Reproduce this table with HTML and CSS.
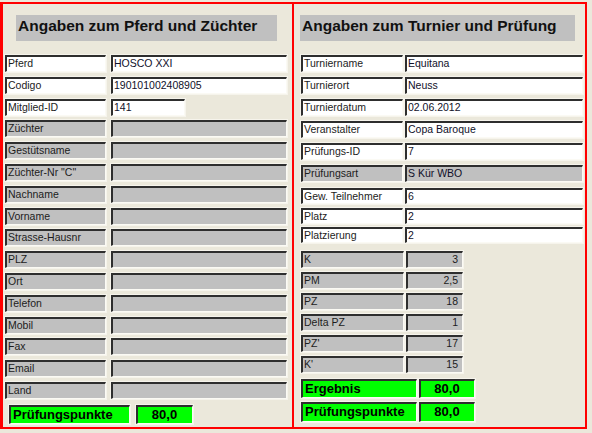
FILE: index.html
```html
<!DOCTYPE html>
<html lang="de">
<head>
<meta charset="utf-8">
<title>Angaben</title>
<link rel="stylesheet" href="styles.css">
</head>
<body>
<div class="sheet">
  <section class="panel panel-left">
    <h2 class="title">Angaben zum Pferd und Züchter</h2>
    <div class="rows rows-left">
      <div class="row"><span class="fld lbl white">Pferd</span><span class="fld val white">HOSCO XXI</span></div>
      <div class="row"><span class="fld lbl white">Codigo</span><span class="fld val white">190101002408905</span></div>
      <div class="row"><span class="fld lbl white">Mitglied-ID</span><span class="fld val val-short white">141</span></div>
      <div class="row"><span class="fld lbl grey">Züchter</span><span class="fld val grey"></span></div>
      <div class="row"><span class="fld lbl grey">Gestütsname</span><span class="fld val grey"></span></div>
      <div class="row"><span class="fld lbl grey">Züchter-Nr "C"</span><span class="fld val grey"></span></div>
      <div class="row"><span class="fld lbl grey">Nachname</span><span class="fld val grey"></span></div>
      <div class="row"><span class="fld lbl grey">Vorname</span><span class="fld val grey"></span></div>
      <div class="row"><span class="fld lbl grey">Strasse-Hausnr</span><span class="fld val grey"></span></div>
      <div class="row"><span class="fld lbl grey">PLZ</span><span class="fld val grey"></span></div>
      <div class="row"><span class="fld lbl grey">Ort</span><span class="fld val grey"></span></div>
      <div class="row"><span class="fld lbl grey">Telefon</span><span class="fld val grey"></span></div>
      <div class="row"><span class="fld lbl grey">Mobil</span><span class="fld val grey"></span></div>
      <div class="row"><span class="fld lbl grey">Fax</span><span class="fld val grey"></span></div>
      <div class="row"><span class="fld lbl grey">Email</span><span class="fld val grey"></span></div>
      <div class="row"><span class="fld lbl grey">Land</span><span class="fld val grey"></span></div>
    </div>
    <div class="score-left">
      <span class="fld green glbl">Prüfungspunkte</span><span class="fld green gval">80,0</span>
    </div>
  </section>

  <section class="panel panel-right">
    <h2 class="title">Angaben zum Turnier und Prüfung</h2>
    <div class="rows group-a">
      <div class="row"><span class="fld rlbl white">Turniername</span><span class="fld rval white">Equitana</span></div>
      <div class="row"><span class="fld rlbl white">Turnierort</span><span class="fld rval white">Neuss</span></div>
      <div class="row"><span class="fld rlbl white">Turnierdatum</span><span class="fld rval white">02.06.2012</span></div>
      <div class="row"><span class="fld rlbl white">Veranstalter</span><span class="fld rval white">Copa Baroque</span></div>
      <div class="row"><span class="fld rlbl white">Prüfungs-ID</span><span class="fld rval white">7</span></div>
      <div class="row"><span class="fld rlbl grey">Prüfungsart</span><span class="fld rval grey">S Kür WBO</span></div>
    </div>
    <div class="rows group-b">
      <div class="row"><span class="fld rlbl white">Gew. Teilnehmer</span><span class="fld rval white">6</span></div>
      <div class="row"><span class="fld rlbl white">Platz</span><span class="fld rval white">2</span></div>
      <div class="row"><span class="fld rlbl white">Platzierung</span><span class="fld rval white">2</span></div>
    </div>
    <div class="rows group-c">
      <div class="row"><span class="fld klbl grey">K</span><span class="fld kval grey">3</span></div>
      <div class="row"><span class="fld klbl grey">PM</span><span class="fld kval grey">2,5</span></div>
      <div class="row"><span class="fld klbl grey">PZ</span><span class="fld kval grey">18</span></div>
      <div class="row"><span class="fld klbl grey">Delta PZ</span><span class="fld kval grey">1</span></div>
      <div class="row"><span class="fld klbl grey">PZ'</span><span class="fld kval grey">17</span></div>
      <div class="row"><span class="fld klbl grey">K'</span><span class="fld kval grey">15</span></div>
    </div>
    <div class="rows group-d">
      <div class="row row-erg"><span class="fld green elbl">Ergebnis</span><span class="fld green eval">80,0</span></div>
      <div class="row row-pp"><span class="fld green elbl">Prüfungspunkte</span><span class="fld green eval">80,0</span></div>
    </div>
  </section>
</div>
</body>
</html>
```

FILE: styles.css
```css
html, body {
  margin: 0;
  padding: 0;
}

body {
  background: #ebe8db;
  font-family: "Liberation Sans", Arial, Helvetica, sans-serif;
  width: 592px;
  height: 433px;
  overflow: hidden;
}

.sheet {
  display: flex;
  margin-top: 2px;
}

.panel {
  box-sizing: border-box;
  height: 427px;
  border: 2px solid #ff0000;
  display: flex;
  flex-direction: column;
  align-items: flex-start;
}

.panel-left {
  width: 294px;
  border-left-width: 3px;
}

.panel-right {
  width: 293px;
  border-left: none;
}

.title {
  box-sizing: border-box;
  margin: 11px 0 0 13px;
  width: 261px;
  height: 26px;
  padding: 2px 0 0 2px;
  background: #c0c0c0;
  font-size: 15.5px;
  line-height: 18px;
  font-weight: bold;
  color: #111;
  white-space: nowrap;
}

.panel-right .title {
  margin-left: 6px;
  width: 275px;
}

.rows {
  display: flex;
  flex-direction: column;
}

.row {
  display: flex;
  height: 17px;
}

.fld {
  box-sizing: border-box;
  display: block;
  height: 100%;
  border-style: solid;
  border-width: 2px 1px 1px 2px;
  border-color: #2e2e2e #fbfaf4 #fbfaf4 #2e2e2e;
  box-shadow: 0 0 0 1px #f6f4ec;
  padding: 0 2px 0 1px;
  font-size: 10.5px;
  line-height: 13px;
  color: #1c1c1c;
  white-space: nowrap;
  overflow: hidden;
}

.white { background: #ffffff; }
.grey { background: #c0c0c0; }
.green {
  background: #00ff00;
  font-weight: bold;
  font-size: 13px;
  line-height: 16px;
  color: #000;
}

.val, .rval { color: #10102a; }

/* left panel */
.rows-left {
  margin-top: 14px;
  gap: 4.8px;
}

.lbl {
  margin-left: 2px;
  width: 101px;
}

.val {
  margin-left: 5px;
  width: 176px;
}

.val-short { width: 74px; }

.score-left {
  display: flex;
  height: 19px;
  margin-top: 6px;
}

.glbl {
  margin-left: 6px;
  width: 121px;
  padding-left: 2px;
}

.gval {
  margin-left: 6px;
  width: 57px;
  text-align: center;
}

/* right panel */
.rlbl {
  margin-left: 7px;
  width: 102px;
}

.rval {
  margin-left: 2px;
  width: 178px;
}

.group-a {
  margin-top: 14px;
  gap: 5px;
}

.group-b {
  margin-top: 6px;
  gap: 3.5px;
}

.group-b .row { height: 16px; }
.group-b .fld { line-height: 12px; }

.group-c {
  margin-top: 8px;
  gap: 4px;
}

.klbl {
  margin-left: 7px;
  width: 103px;
}

.kval {
  margin-left: 2px;
  width: 57px;
  text-align: right;
  padding-right: 4px;
}

.group-d {
  margin-top: 6px;
  gap: 4px;
}

.row-erg { height: 19px; }
.row-pp { height: 20px; }

.elbl {
  margin-left: 7px;
  width: 116px;
  padding-left: 2px;
}

.eval {
  margin-left: 2px;
  width: 56px;
  text-align: center;
}
```
